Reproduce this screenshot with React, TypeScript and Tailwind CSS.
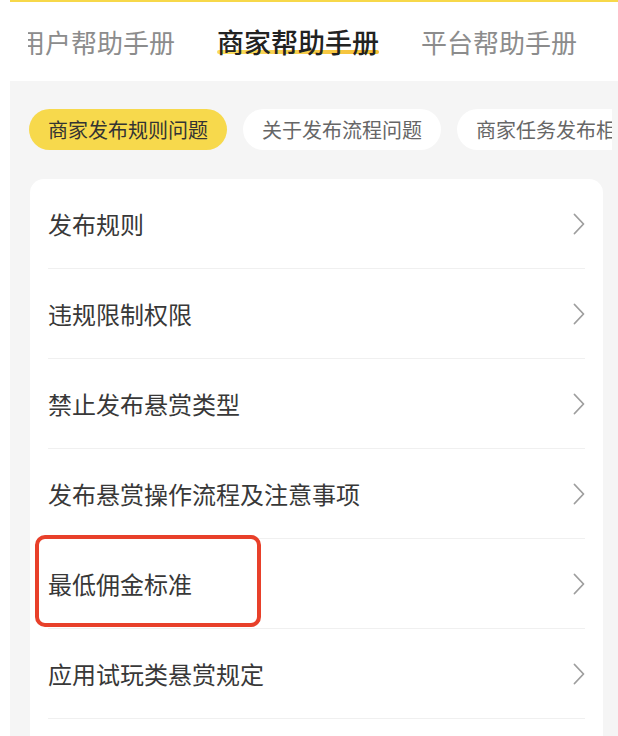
const tabs = [
  { label: "用户帮助手册", active: false },
  { label: "商家帮助手册", active: true },
  { label: "平台帮助手册", active: false },
];

const pills = [
  { label: "商家发布规则问题", active: true },
  { label: "关于发布流程问题", active: false },
  { label: "商家任务发布相关问题", active: false },
];

const rules = [
  "发布规则",
  "违规限制权限",
  "禁止发布悬赏类型",
  "发布悬赏操作流程及注意事项",
  "最低佣金标准",
  "应用试玩类悬赏规定",
];

function Chevron() {
  return (
    <svg width="12" height="22" viewBox="0 0 12 22" fill="none" className="shrink-0">
      <path d="M1.5 1.5 L10.5 11 L1.5 20.5" stroke="#9e9e9e" strokeWidth="1.8" strokeLinecap="round" strokeLinejoin="round" />
    </svg>
  );
}

export default function App() {
  return (
    <div
      className="w-[618px] h-[736px] overflow-hidden bg-white"
      style={{ fontFamily: '"Noto Sans CJK SC", "Noto Sans", sans-serif' }}
    >
      {/* top accent */}
      <div className="ml-[10px] h-[2px] bg-[#f7d84a]" />

      {/* manual tabs */}
      <div className="ml-[28px] h-[79px] overflow-hidden">
        <div className="flex items-center h-full gap-[42px] -ml-[9px] whitespace-nowrap">
          {tabs.map((tab) =>
            tab.active ? (
              <span key={tab.label} className="relative text-[27px] leading-none font-medium text-[#222]">
                <span className="absolute left-0 right-0 top-[22px] h-[4px] rounded-full bg-gradient-to-r from-[#f9dd5e] to-[#f5bf35]" />
                <span className="relative">{tab.label}</span>
              </span>
            ) : (
              <span key={tab.label} className="text-[26px] leading-none text-[#8c8c8c]">
                {tab.label}
              </span>
            )
          )}
        </div>
      </div>

      {/* panel */}
      <div className="ml-[10px] h-full bg-[#f5f5f5] pt-[28px]">
        <div className="ml-[19px] mr-[6px] overflow-hidden">
          <div className="flex gap-[16px] whitespace-nowrap">
            {pills.map((pill) => (
              <span
                key={pill.label}
                className={
                  pill.active
                    ? "h-[41px] px-[19px] flex items-center rounded-full bg-[#f7d94c] text-[20px] text-[#333]"
                    : "h-[41px] px-[19px] flex items-center rounded-full bg-white text-[20px] text-[#666]"
                }
              >
                {pill.label}
              </span>
            ))}
          </div>
        </div>

        <div className="ml-[20px] mr-[15px] mt-[29px] h-[600px] bg-white rounded-[14px] px-[18px]">
          {rules.map((rule, i) => (
            <div
              key={rule}
              className="relative h-[90px] flex items-center justify-between border-b border-[#f0f0f0]"
            >
              <span className="text-[24px] text-[#383838]">{rule}</span>
              <Chevron />
              {i === 4 && (
                <div className="absolute -left-[13px] -top-[4px] w-[226px] h-[92px] rounded-[10px] border-[4px] border-[#e8402a]" />
              )}
            </div>
          ))}
        </div>
      </div>
    </div>
  );
}
